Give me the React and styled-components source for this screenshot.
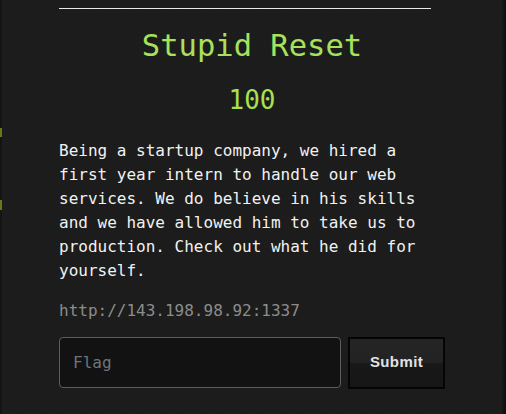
import React from "react";
import styled, { createGlobalStyle } from "styled-components";

const Global = createGlobalStyle`
  html, body { margin: 0; padding: 0; background: #121212; }
  body { font-family: "DejaVu Sans Mono", monospace; }
  * { box-sizing: border-box; }
`;

const Screen = styled.div`
  display: flex;
  width: 506px;
  height: 414px;
  overflow: hidden;
`;

const Gutter = styled.div`
  width: 2px;
  flex: none;
  background: #141414;
  display: flex;
  flex-direction: column;
  padding-top: 128px;
  gap: 63px;
`;

const Mark = styled.span`
  display: block;
  width: 2px;
  height: ${(p) => p.$h}px;
  background: #6e7716;
`;

const Panel = styled.div`
  flex: 1;
  background-color: #1c1c1c;
  background-image: radial-gradient(rgba(90, 130, 70, 0.05) 0.8px, transparent 1px);
  background-size: 5px 5px;
  padding-left: 57px;
`;

const Edge = styled.div`
  width: 4px;
  flex: none;
  background: linear-gradient(90deg, #181818, #0e0e0e);
`;

const Content = styled.div`
  width: 386px;
  display: flex;
  flex-direction: column;
`;

const Rule = styled.hr`
  margin: 8px 14px 0 0;
  border: none;
  height: 1px;
  background: #e8e8e8;
`;

const Title = styled.h2`
  margin: 19px 0 0;
  font-family: "DejaVu Sans Mono", monospace;
  font-weight: normal;
  font-size: 30.5px;
  line-height: 36px;
  text-align: center;
  color: #a6e25c;
`;

const Value = styled.h3`
  margin: 20px 0 0;
  font-family: "DejaVu Sans Mono", monospace;
  font-weight: normal;
  font-size: 26px;
  line-height: 32px;
  text-align: center;
  color: #a8e24e;
`;

const Description = styled.p`
  margin: 23px 0 0;
  font-size: 16px;
  line-height: 24px;
  color: #f2f2f2;
`;

const Link = styled.p`
  margin: 16px 0 0;
  font-size: 16px;
  line-height: 24px;
  color: #8c8c8c;
`;

const Form = styled.form`
  margin-top: 14px;
  display: flex;
  gap: 7px;
  align-items: flex-start;
`;

const FlagInput = styled.input`
  width: 282px;
  height: 51px;
  padding: 0 13px;
  background: #121212;
  border: 1px solid #5c5c5c;
  border-radius: 4px;
  color: #ddd;
  font-family: "DejaVu Sans Mono", monospace;
  font-size: 16px;
  outline: none;
  &::placeholder { color: #6c757d; }
`;

const SubmitButton = styled.button`
  width: 97px;
  height: 52px;
  padding: 0 0 3px;
  border: 2px solid #050505;
  background: linear-gradient(#252525 0, #232323 48%, #181818 52%, #161616 100%);
  color: #e2e2e2;
  font-family: "Liberation Sans", Arial, sans-serif;
  font-weight: bold;
  font-size: 15px;
  letter-spacing: 0.4px;
  cursor: pointer;
`;

export default function App() {
  return (
    <>
      <Global />
      <Screen>
        <Gutter>
          <Mark $h={9} />
          <Mark $h={10} />
        </Gutter>
        <Panel>
          <Content>
            <Rule />
            <Title>Stupid Reset</Title>
            <Value>100</Value>
            <Description>
              Being a startup company, we hired a first year intern to handle our web
              services. We do believe in his skills and we have allowed him to take us to
              production. Check out what he did for yourself.
            </Description>
            <Link>http://143.198.98.92:1337</Link>
            <Form onSubmit={(e) => e.preventDefault()}>
              <FlagInput placeholder="Flag" />
              <SubmitButton type="submit">Submit</SubmitButton>
            </Form>
          </Content>
        </Panel>
        <Edge />
      </Screen>
    </>
  );
}
